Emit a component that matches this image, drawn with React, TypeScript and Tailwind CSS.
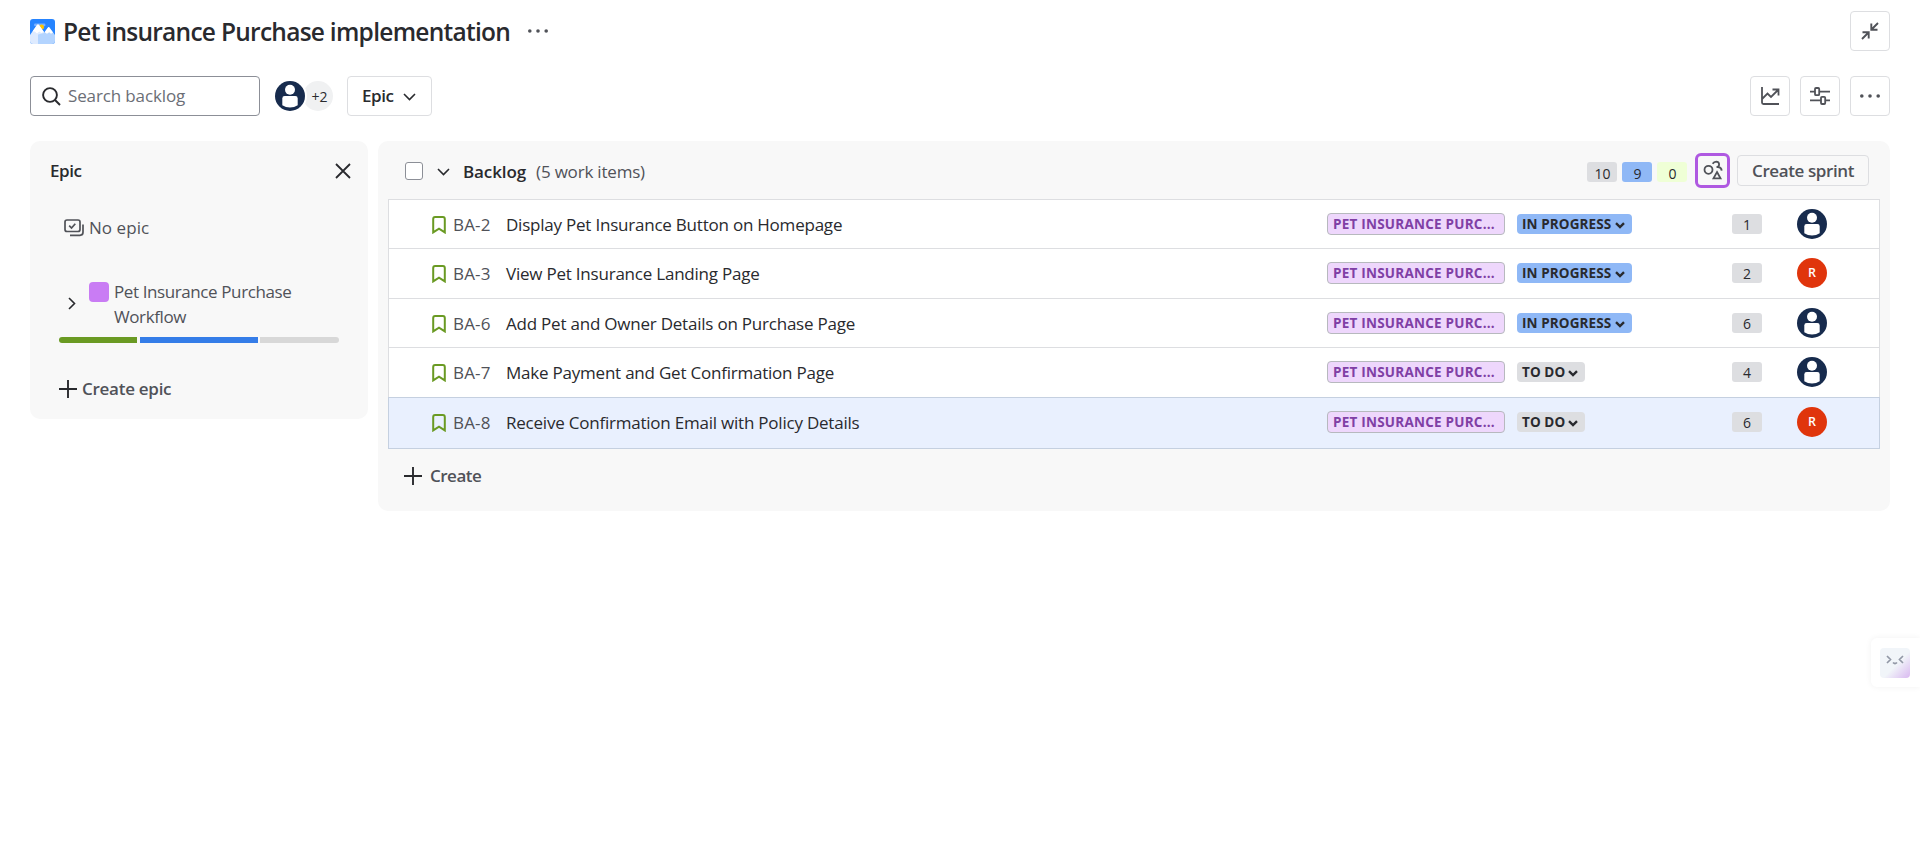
import React from "react";

const BODY = "font-['Open_Sans',sans-serif]";

function Avatar() {
  return (
    <svg width="30" height="30" viewBox="0 0 30 30" className="block shrink-0">
      <circle cx="15" cy="15" r="15" fill="#172b4d" />
      <circle cx="15" cy="8.8" r="5" fill="#fff" />
      <path d="M7.3 17.4q0-2.4 2.4-2.4h10.6q2.4 0 2.4 2.4v6.8q-3.4 2.2-7.7 2.2t-7.7-2.2z" fill="#fff" />
    </svg>
  );
}

function Initial() {
  return (
    <span className="flex size-[30px] shrink-0 items-center justify-center rounded-full bg-[#e0350c] text-[12.5px] font-semibold text-white">
      R
    </span>
  );
}

function Dots() {
  return (
    <svg width="22" height="6" viewBox="0 0 22 6" className="block" fill="#505258">
      <circle cx="2.8" cy="3" r="1.8" />
      <circle cx="11" cy="3" r="1.8" />
      <circle cx="19.2" cy="3" r="1.8" />
    </svg>
  );
}

function Plus() {
  return (
    <svg width="18" height="18" viewBox="0 0 18 18" className="block shrink-0">
      <path d="M9 0v18M0 9h18" stroke="#292a2e" strokeWidth="1.9" />
    </svg>
  );
}

function Chevron({ bold }: { bold?: boolean }) {
  return bold ? (
    <svg width="10" height="7" viewBox="0 0 10 7" className="mt-px block shrink-0">
      <path d="M1 1.2l4 3.8 4-3.8" fill="none" stroke="#292a2e" strokeWidth="2.4" />
    </svg>
  ) : (
    <svg width="13" height="8" viewBox="0 0 13 8" className="mt-px block shrink-0">
      <path d="M1 1l5.500 5.500L12 1" fill="none" stroke="#292a2e" strokeWidth="1.6" />
    </svg>
  );
}

function IconButton({ children }: { children: React.ReactNode }) {
  return (
    <button className="flex size-10 items-center justify-center rounded-[4px] border border-[#dddee1] bg-white">
      {children}
    </button>
  );
}

type Item = { id: string; title: string; status: string; points: number; who: string; h: string };

const items: Item[] = [
  { id: "BA-2", title: "Display Pet Insurance Button on Homepage", status: "IN PROGRESS", points: 1, who: "u", h: "h-[49px]" },
  { id: "BA-3", title: "View Pet Insurance Landing Page", status: "IN PROGRESS", points: 2, who: "R", h: "h-[50px]" },
  { id: "BA-6", title: "Add Pet and Owner Details on Purchase Page", status: "IN PROGRESS", points: 6, who: "u", h: "h-[49px]" },
  { id: "BA-7", title: "Make Payment and Get Confirmation Page", status: "TO DO", points: 4, who: "u", h: "h-[50px]" },
  { id: "BA-8", title: "Receive Confirmation Email with Policy Details", status: "TO DO", points: 6, who: "R", h: "h-[52px]" },
];

function Row({ item, selected }: { item: Item; selected: boolean }) {
  const progress = item.status === "IN PROGRESS";
  return (
    <div
      className={`flex items-start border-t border-r border-l pt-[9px] pl-[43px] ${item.h} ${
        selected ? "border-b border-[#c5d0e0] bg-[#e9f0fe]" : "border-[#dddee1] bg-white"
      }`}
    >
      <div className="flex h-[31px] w-[895px] shrink-0 items-center">
        <svg width="14" height="18" viewBox="0 0 14 18" className="block shrink-0">
          <path d="M1.2 3q0-1.900 1.900-1.900h7.800q1.900 0 1.900 1.900v13.400L7 12.600l-5.800 3.800z" fill="none" stroke="#6a9a23" strokeWidth="2" />
        </svg>
        <span className="ml-[7px] w-[53px] shrink-0 text-[17px] tracking-[0.15px] whitespace-nowrap text-[#505258]">{item.id}</span>
        <span className="text-[17px] tracking-[-0.22px] whitespace-nowrap text-[#292a2e]">{item.title}</span>
      </div>
      <span className="mt-1 flex h-[22px] w-[178px] shrink-0 items-center rounded-[4px] border border-[#b7b9be] bg-[#eed7fc] pt-px pl-[5px] text-[13.5px] font-bold whitespace-nowrap text-[#803fa5]">
        <span className="tracking-[0.23px]">PET INSURANCE PURC...</span>
      </span>
      <div className="mt-[5px] ml-3 w-[215px] shrink-0">
        <span
          className={`flex h-5 items-center justify-between rounded-[4px] pt-px pr-[7px] pl-[5px] text-[13.5px] font-bold whitespace-nowrap text-[#292a2e] ${
            progress ? "w-[115px] bg-[#8fb8f6]" : "w-[68px] bg-[#dddee1]"
          }`}
        >
          <span className="tracking-[0.1px]">{item.status}</span>
          <Chevron bold />
        </span>
      </div>
      <span className="mt-[5px] flex h-5 w-[30px] shrink-0 items-center justify-center rounded-[3px] bg-[#dddee1] pt-px text-[14px] text-[#292a2e]">
        {item.points}
      </span>
      <div className="ml-[35px]">{item.who === "R" ? <Initial /> : <Avatar />}</div>
    </div>
  );
}

export default function App() {
  return (
    <div className={`relative h-[865px] w-[1920px] overflow-hidden bg-white text-[#292a2e] ${BODY}`}>
      <header className="flex h-[76px] items-start justify-between pt-[11px] pr-[30px] pl-[30px]">
        <div className="flex h-10 items-center">
          <svg width="25" height="25" viewBox="0 0 25 25" className="block">
            <defs>
              <clipPath id="logo">
                <rect width="25" height="25" rx="3" />
              </clipPath>
            </defs>
            <g clipPath="url(#logo)">
              <rect width="25" height="25" fill="#2684ff" />
              <rect x="4" y="4.5" width="11.5" height="2.8" rx="1.4" fill="#79b0ff" />
              <circle cx="11.5" cy="8" r="2.5" fill="#ffc400" />
              <path d="M0 16L7.200 5.800q.8-.8 1.600 0L15 14.500V25H0z" fill="#deebff" />
              <path d="M8 25V15.500l6-1.500 4-5.500q.7-.8 1.400 0L25 16v9z" fill="#b3d4ff" />
              <path d="M2.500 12.500L7.200 5.800q.8-.8 1.600 0l5 7-2.500 1.200-2-1.600-2.300 2-2.200-2zM14.500 13.300L18 8.500q.7-.8 1.400 0l3.600 5-2 1.200-1.800-1.500-2.200 1.500z" fill="#fff" />
            </g>
          </svg>
          <h1 className="ml-[8px] w-[464px] pt-px text-[24.5px] leading-8 font-semibold tracking-[-0.73px] whitespace-nowrap">
            Pet insurance Purchase implementation
          </h1>
          <Dots />
        </div>
        <IconButton>
          <svg width="18" height="18" viewBox="0 0 18 18" fill="none" stroke="#505258" strokeWidth="1.9">
            <path d="M17 1l-6.500 6.500M10.300 1.500v6.200h6.200M1 17l6.500-6.500M1.500 10.300h6.200v6.200" />
          </svg>
        </IconButton>
      </header>

      <div className="flex h-10 items-center justify-between px-[30px]">
        <div className="flex items-center">
          <div className="flex h-10 w-[230px] items-center rounded-[4px] border border-[#8c8f97] bg-white pl-[11px]">
            <svg width="19" height="19" viewBox="0 0 19 19" fill="none" stroke="#292a2e" strokeWidth="1.9">
              <circle cx="8" cy="8" r="6.9" />
              <path d="M13 13l5 5" />
            </svg>
            <span className="ml-[7px] text-[17px] tracking-[-0.13px] text-[#6b6e76]">Search backlog</span>
          </div>
          <div className="ml-[15px] flex items-center">
            <span className="relative z-10 rounded-full ring-2 ring-white">
              <Avatar />
            </span>
            <span className="-ml-[2px] flex size-[30px] items-center justify-center rounded-full bg-[#f0f1f2] pt-px pl-[3px] text-[14px]">+2</span>
          </div>
          <button className="ml-[14px] flex h-10 w-[85px] items-center justify-between rounded-[4px] border border-[#dddee1] bg-white pr-[15px] pl-[14px] text-[17px] font-semibold">
            <span className="tracking-[-0.4px]">Epic</span>
            <Chevron />
          </button>
        </div>
        <div className="flex gap-[10px]">
          <IconButton>
            <svg width="20" height="20" viewBox="0 0 20 20" fill="none" stroke="#505258" strokeWidth="1.8">
              <path d="M2 1v15.500q0 1.500 1.500 1.500H19M2 13l5.500-5.500 3.500 3.500 7-7M12.500 3.500h6v6" />
            </svg>
          </IconButton>
          <IconButton>
            <svg width="20" height="18" viewBox="0 0 20 18" fill="none" stroke="#505258" strokeWidth="1.8">
              <path d="M0 4.600h5M9.200 4.600H20M0 13.400h11M15.200 13.400H20" />
              <rect x="5" y="1" width="4.2" height="7.2" rx="1" />
              <rect x="11" y="9.8" width="4.2" height="7.2" rx="1" />
            </svg>
          </IconButton>
          <IconButton>
            <Dots />
          </IconButton>
        </div>
      </div>

      <main className="flex items-start gap-[10px] px-[30px] pt-[25px]">
        <aside className="h-[278px] w-[338px] shrink-0 rounded-[10px] bg-[#f8f8f8]">
          <div className="flex h-[60px] items-center justify-between pr-[17px] pl-[20px]">
            <h2 className="text-[17px] font-semibold tracking-[-0.4px]">Epic</h2>
            <svg width="16" height="16" viewBox="0 0 16 16" className="block">
              <path d="M1 1l14 14M15 1L1 15" stroke="#292a2e" strokeWidth="1.8" />
            </svg>
          </div>
          <div className="flex h-[54px] items-center pl-[34px]">
            <svg width="20" height="18" viewBox="0 0 20 18" fill="none" stroke="#505258" strokeWidth="1.7" className="block">
              <rect x="1" y="1" width="15" height="11.5" rx="2" />
              <path d="M5.200 6.700l2.300 2.300 3.800-4.300M19 5.500v7.800q0 3-3 3H6" />
            </svg>
            <span className="ml-[5px] text-[17px] tracking-[0.05px] text-[#505258]">No epic</span>
          </div>
          <div className="flex h-[82px] items-start pt-[27px] pl-[38px]">
            <svg width="8" height="13" viewBox="0 0 8 13" className="mt-[15px] block">
              <path d="M1 1l5.500 5.500L1 12" fill="none" stroke="#292a2e" strokeWidth="1.6" />
            </svg>
            <span className="ml-[13px] size-5 shrink-0 rounded-[4px] bg-[#c97cf4]" />
            <span className="-mt-[3px] ml-[5px] w-[190px] text-[17px] leading-[25px] tracking-[-0.4px] text-[#505258]">
              Pet Insurance Purchase
              <br />
              Workflow
            </span>
          </div>
          <div className="flex h-[6px] pl-[29px]">
            <span className="mr-[3px] w-[78px] rounded-l-[3px] bg-[#6a9a23]" />
            <span className="mr-[2px] w-[118px] bg-[#357de8]" />
            <span className="w-[79px] rounded-r-[3px] bg-[#d8d8d8]" />
          </div>
          <div className="mt-[37px] flex h-[18px] items-center pl-[29px]">
            <Plus />
            <span className="ml-[5px] text-[17px] font-semibold tracking-[-0.27px] text-[#505258]">Create epic</span>
          </div>
        </aside>

        <section className="h-[370px] w-[1512px] shrink-0 rounded-[10px] bg-[#f8f8f8] px-[10px]">
          <div className="flex h-[58px] items-center justify-between pr-[11px] pl-[17px]">
            <div className="flex items-center pt-[2px]">
              <span className="size-[18px] rounded-[3px] border border-[#8c8f97] bg-white" />
              <span className="ml-[14px]">
                <Chevron />
              </span>
              <h2 className="ml-[13px] pt-px text-[17px] font-semibold tracking-[-0.1px]">Backlog</h2>
              <span className="ml-[10px] pt-px text-[17px] tracking-[-0.2px] text-[#505258]">(5 work items)</span>
            </div>
            <div className="flex items-center text-[14px]">
              <span className="mt-1 flex h-5 w-[30px] items-center justify-center rounded-[3px] bg-[#dddee1] pt-[2px] pl-px">10</span>
              <span className="mt-1 ml-[5px] flex h-5 w-[30px] items-center justify-center rounded-[3px] bg-[#8fb8f6] pt-[2px] pl-px">9</span>
              <span className="mt-1 ml-[5px] flex h-5 w-[30px] items-center justify-center rounded-[3px] bg-[#efffd6] pt-[2px] pl-px">0</span>
              <button className="ml-2 flex size-[35px] items-center justify-center rounded-[6px] border-[3px] border-[#af59e1]">
                <svg width="20" height="20" viewBox="0 0 20 20" fill="none" stroke="#505258" strokeWidth="1.8" className="shrink-0">
                  <circle cx="5.500" cy="9.800" r="4" />
                  <path d="M9.600 3.800Q11 1.600 13.200 1.600q2.900.2 2.900 2.800 0 2.200-2.500 2.700h1.500q3.400.2 3.600 3.500M14 12l3.500 6.300h-7z" />
                </svg>
              </button>
              <button className="ml-[7px] h-[31px] w-[132px] rounded-[4px] border border-[#dddee1] pt-px text-[17px] leading-none font-semibold tracking-[-0.4px] whitespace-nowrap text-[#505258]">
                Create sprint
              </button>
            </div>
          </div>
          <div>
            {items.map((item, i) => (
              <Row key={item.id} item={item} selected={i === items.length - 1} />
            ))}
          </div>
          <div className="mt-[18px] flex h-[18px] items-center pl-[16px]">
            <Plus />
            <span className="ml-2 text-[17px] font-semibold tracking-[-0.5px] text-[#505258]">Create</span>
          </div>
        </section>
      </main>

      <div className="absolute top-[638px] right-0 flex h-[49px] w-[49px] items-center rounded-l-[6px] bg-white pl-[9px] shadow-[0_0_6px_rgba(0,0,0,0.06)]">
        <span className="flex size-[30px] justify-center rounded-[4px] bg-[linear-gradient(135deg,#f1f5f9_55%,#d9b8f0_100%)] pt-[7px]">
          <svg width="18" height="10" viewBox="0 0 18 10" fill="none" stroke="#9298a6" strokeWidth="1.7">
            <path d="M1 1l3.500 3.500L1 8M17 1l-3.500 3.500L17 8M7 7.500q2 2 4 0" />
          </svg>
        </span>
      </div>
    </div>
  );
}
